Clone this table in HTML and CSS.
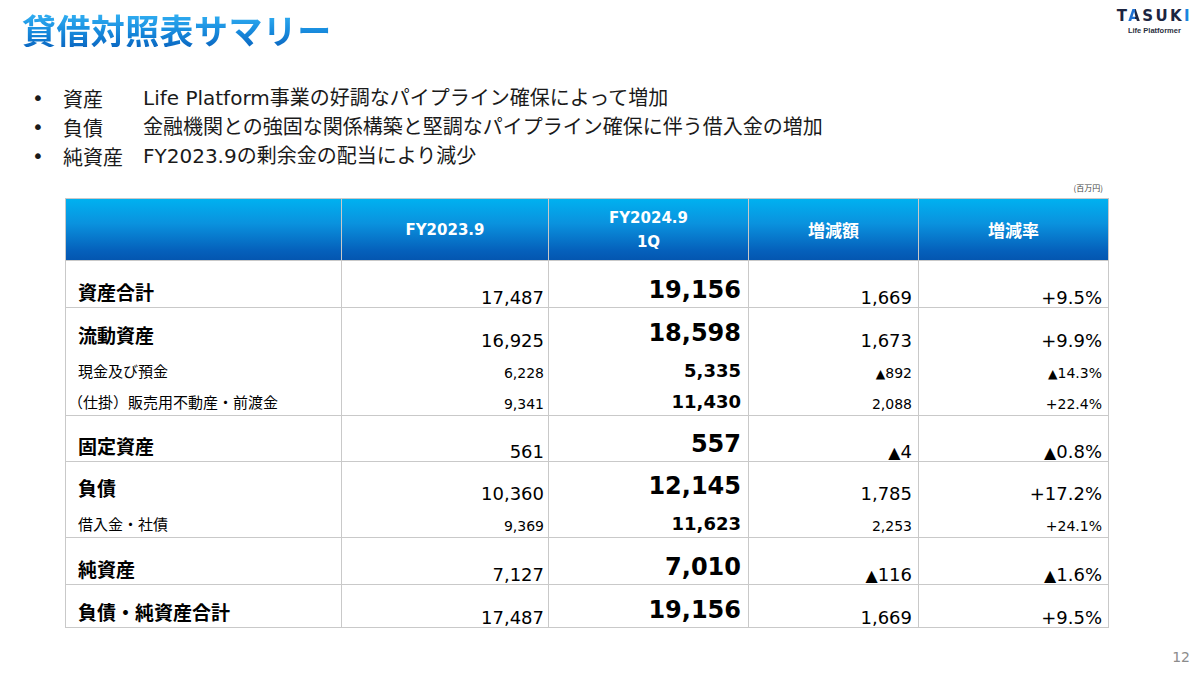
FILE: index.html
```html
<!DOCTYPE html>
<html lang="ja">
<head>
<meta charset="utf-8">
<title>貸借対照表サマリー</title>
<link rel="stylesheet" href="styles.css">
</head>
<body>
<div class="slide">
  <header class="top">
    <h1 class="title">貸借対照表サマリー</h1>
    <div class="logo">
      <div class="logo-word"><span>T</span><span class="logo-a">A</span><span>SUK</span><span class="logo-i">I</span></div>
      <div class="logo-sub">Life Platformer</div>
    </div>
  </header>

  <ul class="bullets">
    <li><span class="dot">•</span><span class="blab">資産</span><span>Life Platform事業の好調なパイプライン確保によって増加</span></li>
    <li><span class="dot">•</span><span class="blab">負債</span><span>金融機関との強固な関係構築と堅調なパイプライン確保に伴う借入金の増加</span></li>
    <li><span class="dot">•</span><span class="blab">純資産</span><span>FY2023.9の剰余金の配当により減少</span></li>
  </ul>

  <div class="note">(百万円)</div>

  <table class="bs">
    <thead>
      <tr>
        <th class="c1"></th>
        <th class="c2">FY2023.9</th>
        <th class="c3">FY2024.9<br>1Q</th>
        <th class="c4 hj">増減額</th>
        <th class="c5 hj">増減率</th>
      </tr>
    </thead>
    <tbody>
      <tr class="end h47">
        <td class="lab">資産合計</td><td class="v">17,487</td><td class="v big">19,156</td><td class="v">1,669</td><td class="v">+9.5%</td>
      </tr>
      <tr class="h42">
        <td class="lab">流動資産</td><td class="v">16,925</td><td class="v big">18,598</td><td class="v">1,673</td><td class="v">+9.9%</td>
      </tr>
      <tr class="h34 sub">
        <td class="lab">現金及び預金</td><td class="v">6,228</td><td class="v big">5,335</td><td class="v"><span class="tri">▲</span>892</td><td class="v"><span class="tri">▲</span>14.3%</td>
      </tr>
      <tr class="end h32 sub">
        <td class="lab paren">（仕掛）販売用不動産・前渡金</td><td class="v">9,341</td><td class="v big">11,430</td><td class="v">2,088</td><td class="v">+22.4%</td>
      </tr>
      <tr class="end h46">
        <td class="lab">固定資産</td><td class="v">561</td><td class="v big">557</td><td class="v"><span class="tri">▲</span>4</td><td class="v"><span class="tri">▲</span>0.8%</td>
      </tr>
      <tr class="h41">
        <td class="lab">負債</td><td class="v">10,360</td><td class="v big">12,145</td><td class="v">1,785</td><td class="v">+17.2%</td>
      </tr>
      <tr class="end h35 sub">
        <td class="lab">借入金・社債</td><td class="v">9,369</td><td class="v big">11,623</td><td class="v">2,253</td><td class="v">+24.1%</td>
      </tr>
      <tr class="end h47">
        <td class="lab">純資産</td><td class="v">7,127</td><td class="v big">7,010</td><td class="v"><span class="tri">▲</span>116</td><td class="v"><span class="tri">▲</span>1.6%</td>
      </tr>
      <tr class="end h43">
        <td class="lab">負債・純資産合計</td><td class="v">17,487</td><td class="v big">19,156</td><td class="v">1,669</td><td class="v">+9.5%</td>
      </tr>
    </tbody>
  </table>

  <div class="pageno">12</div>
</div>
</body>
</html>
```

FILE: styles.css
```css
html, body {
  margin: 0;
  padding: 0;
  background: #ffffff;
}

.slide {
  width: 1200px;
  height: 675px;
  overflow: hidden;
  font-family: "DejaVu Sans", "Noto Sans CJK JP", sans-serif;
  color: #1a1a1a;
}

/* ---------- header ---------- */
.top {
  display: flex;
  justify-content: space-between;
  align-items: flex-start;
  height: 47px;
}

.title {
  margin: 0;
  padding: 12px 0 0 22px;
  font-family: "Noto Sans CJK JP", sans-serif;
  font-weight: 700;
  font-size: 34px;
  line-height: 35px;
  letter-spacing: 0.4px;
  background-image: linear-gradient(180deg, #34b3f4 0%, #1a8fe0 50%, #0a68c2 100%);
  background-origin: content-box;
  background-clip: text;
  -webkit-background-clip: text;
  color: transparent;
}

.logo {
  display: flex;
  flex-direction: column;
  align-items: center;
  padding: 9px 8px 0 0;
}

.logo-word {
  font-family: "DejaVu Sans", sans-serif;
  font-weight: 700;
  font-size: 15px;
  line-height: 15px;
  letter-spacing: 2.4px;
  color: #1c2541;
}

.logo-a {
  background-image: linear-gradient(90deg, #1d6fd1 0%, #1d6fd1 48%, #1c2541 52%, #1c2541 100%);
  background-clip: text;
  -webkit-background-clip: text;
  color: transparent;
}

.logo-i {
  color: #1a86de;
}

.logo-sub {
  margin-top: 3px;
  font-family: "Liberation Sans", sans-serif;
  font-weight: 700;
  font-size: 7.5px;
  line-height: 8px;
  color: #2a2f40;
}

/* ---------- bullets ---------- */
.bullets {
  list-style: none;
  margin: 37px 0 0 0;
  padding: 0 0 0 32px;
  font-size: 20px;
  line-height: 29px;
  color: #1a1a1a;
}

.bullets li {
  display: flex;
}

.dot {
  width: 31px;
  flex: none;
}

.blab {
  width: 80px;
  flex: none;
  font-family: "Noto Sans CJK JP", sans-serif;
}

/* ---------- unit note ---------- */
.note {
  width: 1103px;
  margin-top: 12px;
  text-align: right;
  font-family: "Noto Sans CJK JP", sans-serif;
  font-size: 8px;
  line-height: 10px;
  color: #444444;
}

/* ---------- table ---------- */
.bs {
  margin: 5px 0 0 65px;
  width: 1044px;
  table-layout: fixed;
  border-collapse: separate;
  border-spacing: 0;
}

.bs th,
.bs td {
  box-sizing: border-box;
  padding: 0;
  border-right: 1px solid #c9c9c9;
  vertical-align: bottom;
  line-height: 1;
  color: #000000;
}

.bs th:first-child,
.bs td:first-child {
  border-left: 1px solid #c9c9c9;
}

.c1 { width: 277px; }
.c2 { width: 207px; }
.c3 { width: 200px; }
.c4 { width: 170px; }
.c5 { width: 190px; }

.bs thead th {
  height: 63px;
  border-top: 1px solid #c9c9c9;
  border-bottom: 1px solid #c9c9c9;
  background: linear-gradient(180deg, #00b1f0 0%, #0a92de 40%, #0560bb 85%, #0456b0 100%);
  color: #ffffff;
  vertical-align: middle;
  text-align: center;
  font-family: "DejaVu Sans", "Noto Sans CJK JP", sans-serif;
  font-weight: 700;
  font-size: 15px;
  line-height: 24px;
}

.bs thead th.hj {
  font-family: "Noto Sans CJK JP", sans-serif;
  font-size: 17px;
}

.bs tr.end td {
  border-bottom: 1px solid #c9c9c9;
}

.h47 td { height: 47px; }
.h46 td { height: 46px; }
.h43 td { height: 43px; }
.h42 td { height: 42px; }
.h41 td { height: 41px; }
.h35 td { height: 35px; }
.h34 td { height: 34px; }
.h32 td { height: 32px; }

.lab {
  text-align: left;
  padding-left: 12px !important;
  padding-bottom: 6px !important;
  font-family: "Noto Sans CJK JP", sans-serif;
  font-weight: 700;
  font-size: 19px;
  white-space: nowrap;
}

.sub .lab {
  font-weight: 400;
  font-size: 15px;
  padding-bottom: 6px !important;
}

.sub .lab.paren {
  padding-left: 2px !important;
}

.v {
  text-align: right;
  font-family: "DejaVu Sans", sans-serif;
  font-size: 18px;
  padding-bottom: 3px;
  color: #1a1a1a;
}

.v.big {
  font-size: 24px;
  font-weight: 700;
  padding-bottom: 5px;
  color: #000000;
}

.sub .v {
  font-size: 14px;
  padding-bottom: 4px;
}

.sub .v.big {
  font-size: 18px;
  padding-bottom: 4px;
}

.tri {
  font-size: 0.88em;
  vertical-align: 0.03em;
}

.bs td:nth-child(2) { padding-right: 4px; }
.bs td:nth-child(3) { padding-right: 7px; }
.bs td:nth-child(4) { padding-right: 6px; }
.bs td:nth-child(5) { padding-right: 6px; }

/* ---------- page number ---------- */
.pageno {
  margin-top: 21px;
  padding-right: 10px;
  text-align: right;
  font-family: "DejaVu Sans", sans-serif;
  font-size: 14px;
  line-height: 16px;
  color: #8c8c8c;
}
```
